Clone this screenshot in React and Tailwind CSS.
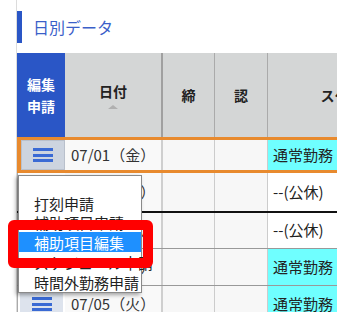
import React from "react";

const rows = [
  { date: "07/01（金）", sched: "通常勤務", cyan: true, active: true, row: "h-[33px] border-b-[3px] border-[#e88a2e]" },
  { date: "07/02（土）", sched: "--(公休)", cyan: false, row: "h-[40px] border-b-2 border-[#111]" },
  { date: "07/03（日）", sched: "--(公休)", cyan: false, row: "h-[36px] border-b border-[#999]" },
  { date: "07/04（月）", sched: "通常勤務", cyan: true, row: "h-[37px] border-b border-[#999]" },
  { date: "07/05（火）", sched: "通常勤務", cyan: true, row: "h-[37px] border-b border-[#999]" },
];

const menu = ["打刻申請", "補助項目申請", "補助項目編集", "スケジュール申請", "時間外勤務申請"];

const Burger = () => (
  <div className="flex flex-col gap-[2.5px]">
    <span className="block h-[3px] w-[20px] bg-[#3a6ad4]"></span>
    <span className="block h-[3px] w-[20px] bg-[#3a6ad4]"></span>
    <span className="block h-[3px] w-[20px] bg-[#3a6ad4]"></span>
  </div>
);

const App = () => {
  return (
    <div className="relative w-[337px] h-[312px] overflow-hidden bg-white font-['Noto_Sans_CJK_JP','Noto_Sans',sans-serif]">
      <div className="ml-[16px] h-full border-l border-[#dcdcdc] pt-[11px]">
        {/* 見出し */}
        <div className="flex items-center h-[32px]">
          <div className="w-[5px] h-full bg-[#2a56c6]"></div>
          <h2 className="ml-[11px] text-[16px] text-[#3b5fc9]">日別データ</h2>
        </div>

        {/* テーブル */}
        <div className="mt-[10px] w-[440px]">
          <div className="flex h-[87px] border-b-[3px] border-[#e88a2e]">
            <div className="w-[48px] shrink-0 bg-[#2a56c6] text-white font-bold text-[14px] leading-[22px] flex flex-col items-center justify-center">
              <span>編集</span>
              <span>申請</span>
            </div>
            <div className="w-[98px] shrink-0 bg-[#d4d6d6] border-r-2 border-[#a0a0a0] flex flex-col items-center justify-center pt-[2px]">
              <span className="font-bold text-[14px] leading-[16px] text-[#222]">日付</span>
              <span className="mt-[6px] w-0 h-0 border-l-[5px] border-r-[5px] border-b-[4px] border-l-transparent border-r-transparent border-b-[#b0b0b0]"></span>
            </div>
            <div className="w-[52px] shrink-0 bg-[#d4d6d6] border-r border-[#aaa] flex items-center justify-center font-bold text-[14px] text-[#222]">締</div>
            <div className="w-[53px] shrink-0 bg-[#d4d6d6] border-r border-[#aaa] flex items-center justify-center font-bold text-[14px] text-[#222]">認</div>
            <div className="w-[188px] shrink-0 bg-[#d4d6d6] flex items-center justify-center font-bold text-[14px] text-[#222]">スケジュール</div>
          </div>

          {rows.map((r) => (
            <div key={r.date} className={"flex " + r.row}>
              {r.active ? (
                <div className="w-[48px] shrink-0 border-l-4 border-[#e88a2e] flex">
                  <div className="flex-1 bg-[#cdd4df] border border-[#b9c0cc] flex items-center justify-center">
                    <Burger />
                  </div>
                </div>
              ) : (
                <div className="w-[48px] shrink-0 border-l border-[#aaa] p-[2px] bg-white flex">
                  <div className="flex-1 bg-[#dde3ed] flex items-center justify-center">
                    <Burger />
                  </div>
                </div>
              )}
              <div className="w-[98px] shrink-0 bg-[#f9f9f9] border-r-2 border-[#cfcfcf] flex items-center pl-[6px] text-[15px] text-[#333]">
                {r.date}
              </div>
              <div className="w-[52px] shrink-0 bg-[#f7f7f7] border-r border-[#ccc]"></div>
              <div className="w-[53px] shrink-0 bg-[#f7f7f7] border-r border-[#ccc]"></div>
              <div className={"flex-1 flex items-center pl-[5px] text-[15px] text-[#222] " + (r.cyan ? "bg-[#6fffff]" : "bg-white")}>
                {r.sched}
              </div>
            </div>
          ))}
        </div>
      </div>

      {/* ドロップダウン */}
      <div className="absolute left-[18px] top-[175px] w-[124px] border border-[#8a8a8a] bg-white pt-[18px] shadow-[-2px_2px_4px_rgba(0,0,0,0.35)]">
        {menu.map((m, i) => (
          <div
            key={m}
            className={
              "flex items-center pl-[15px] text-[15px] leading-none whitespace-nowrap " +
              (i < 2 ? "h-[19px] " : "h-[20px] ") +
              (i === 2 ? "bg-[#1e90ff] text-white" : "text-[#222]")
            }
          >
            {m}
          </div>
        ))}
      </div>

      {/* 強調枠 */}
      <div className="absolute left-[8px] top-[220px] w-[145px] h-[48px] border-[10px] border-[#ff0000] rounded-[6px]"></div>
    </div>
  );
};

export default App;
